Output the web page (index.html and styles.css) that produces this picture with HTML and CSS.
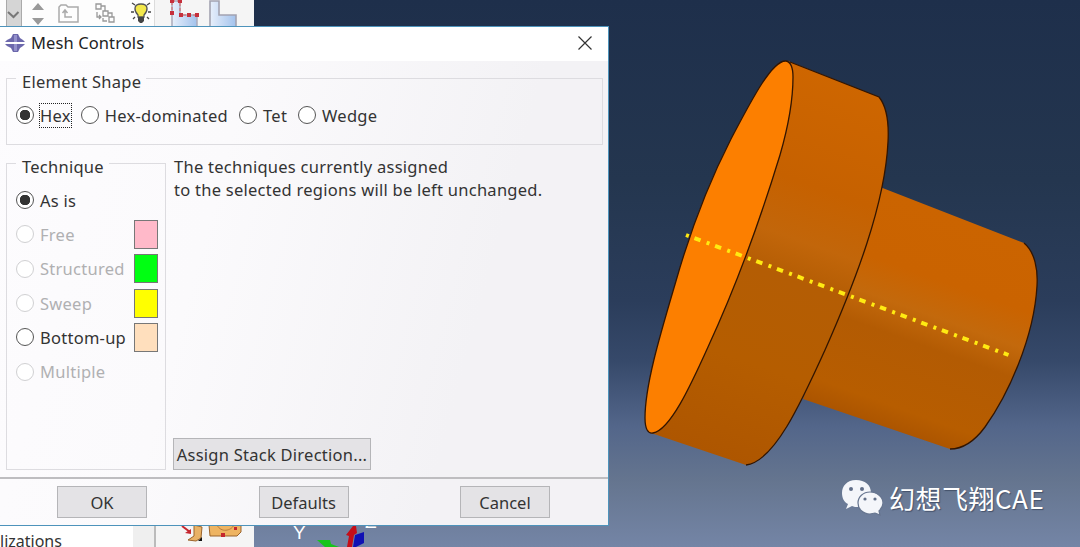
FILE: index.html
```
<!DOCTYPE html>
<html lang="en">
<head>
    <meta charset="UTF-8">
    <meta name="viewport" content="width=device-width, initial-scale=1.0">
    <title>Mesh Controls</title>
    <link rel="stylesheet" href="styles.css">
</head>
<body>
    <div class="app">
        <div class="sidebar">
            <svg class="toolbar" viewBox="0 0 254 26">
                <rect width="154" height="26" fill="#fdfdfd"/>
                <rect x="154" width="100" height="26" fill="#f5f5f5"/>
                <path d="M154.5 0v26" stroke="#dcdcdc"/>
                <rect x="6.500" y="-2" width="15" height="30" fill="#d5d5d5" stroke="#aaa"/>
                <path d="M8 12l5.500 5 5-5" fill="none" stroke="#777" stroke-width="2"/>
                <path d="M32 10l6-7 6 7zM32 18h12l-6 7z" fill="#999"/>
                <path d="M59 22V7l2-2h5l2 2h10v15zM72 17h-7v-6m-2.500 2l2.500-3 2.500 3" fill="none" stroke="#aaa" stroke-width="1.500"/>
                <path d="M96 4h5v5h-5zM103 11h5v5h-5zM109 17h5v5h-5zM101 6h4v5M108 13h4v4M97 12v5h4m-2-2l2 2-2 2M103 18v3h4" fill="none" stroke="#999" stroke-width="1.300"/>
                <path d="M141 4c-8 0-7 7-3 11v2h6v-2c4-4 5-11-3-11z" fill="#f3e84b" stroke="#555" stroke-width="1.300"/>
                <path d="M138 17h6v4l-2 2h-2l-2-2z" fill="#444"/>
                <path d="M132 3l3 2M131 12h3M133 19l2-2M150 3l-3 2M151 12h-3M149 19l-2-2" stroke="#444" stroke-width="1.300"/>
                <path d="M172 27V1h8v14h17v12z" fill="url(#part)" stroke="#aab" stroke-width="1.500"/>
                <path d="M172 1h8v14h17M172 2v11" fill="none" stroke="#d66" stroke-dasharray="3 2"/>
                <path d="M170 0h4v3h-4zM178 0h4v3h-4zM170 11h4v4h-4zM179 13h4v4h-4zM187 13h4v4h-4zM195 13h4v4h-4z" fill="#c6303c"/>
                <path d="M210 27V1h9v14h17v12z" fill="url(#part)" stroke="#a3a3b1" stroke-width="1.600"/>
                <defs>
                    <linearGradient id="part">
                        <stop offset="0" stop-color="#e7effb"/>
                        <stop offset="1" stop-color="#a3c2ec"/>
                    </linearGradient>
                </defs>
            </svg>
            <div class="tree">
                <span class="tree-text">lizations</span>
                <span class="tree-scroll"></span>
                <svg class="tools" viewBox="156 526 98 21">
                    <path d="M194 525l8 2-1 11-5 3-8-1 6-4z" fill="#e9b266" stroke="#9b642c"/>
                    <path d="M182 526l8 6" stroke="#c5262e" stroke-width="2"/>
                    <path d="M185 533l6-4v5z" fill="#c5262e"/>
                    <path d="M198 541l4-4v4z" fill="#111"/>
                    <path d="M209 525h32v7l-4 4h-27z" fill="#eeb462" stroke="#9b642c"/>
                    <path d="M217 525c4 8 14 6 17 0" fill="none" stroke="#b67b3b"/>
                    <path d="M221 533h4v4h-4zM234 527h3v3h-3z" fill="#c5262e"/>
                </svg>
            </div>
        </div>

        <div class="viewport">
            <svg class="model" viewBox="254 0 826 547">
                <defs>
                    <linearGradient id="flange" gradientUnits="userSpaceOnUse" x1="832" y1="75" x2="700" y2="450">
                        <stop offset="0" stop-color="#ce6600"/>
                        <stop offset=".28" stop-color="#c66100"/>
                        <stop offset=".42" stop-color="#c2660a"/>
                        <stop offset=".52" stop-color="#b45d04"/>
                        <stop offset=".75" stop-color="#b55d00"/>
                        <stop offset="1" stop-color="#ae5600"/>
                    </linearGradient>
                    <linearGradient id="shaft" gradientUnits="userSpaceOnUse" x1="955" y1="215" x2="880" y2="425">
                        <stop offset="0" stop-color="#cb6400"/>
                        <stop offset=".3" stop-color="#ca6300"/>
                        <stop offset=".46" stop-color="#c3690c"/>
                        <stop offset=".6" stop-color="#b35b03"/>
                        <stop offset=".9" stop-color="#b75d00"/>
                        <stop offset="1" stop-color="#ac5500"/>
                    </linearGradient>
                </defs>

                <!-- shaft -->
                <path d="M880 187L1024 243C1035 252 1038 270 1037 286C1034 338 1008 395 985 427C974 442 962 449 950 449L803 399z" fill="url(#shaft)"/>
                <path class="edge" d="M1024 243C1035 252 1038 270 1037 286C1034 338 1008 395 985 427C974 442 962 449 950 449"/>

                <!-- flange -->
                <path d="M788 61L879 97C887 107 889 124 888 142C885 204 856 280 825 350C801 403 774 462 746 465L651 433z" fill="url(#flange)"/>
                <path class="edge" d="M790 62L879 97C887 107 889 124 888 142C885 204 856 280 825 350C801 403 774 462 746 465"/>
                <path d="M786 61C772 60 751 101 731 139C708 184 690 232 676 281C661 332 645 384 645 418C645 429 648 434 653 433C670 430 690 387 708 347C738 282 762 214 780 155C789 124 793 96 793 77C793 69 791 62 786 61z" fill="#fc7f00" stroke="#321500" stroke-width="1.300"/>

                <path class="axis" d="M686 235L1008.500 355"/>

                <!-- triad -->
                <text class="triad" x="293" y="539">Y</text>
                <text class="triad" x="365" y="528">Z</text>
                <path d="M317 540h13l1 4 8 3h-14z" fill="#16c51b"/>
                <path d="M346 535l7-9h3l1 7-3 2-2 12h-5l2-11z" fill="#c50d17"/>
                <path d="M355 535l9-3v11l-8 4h-3z" fill="#1010b4"/>
            </svg>
            <div class="watermark">
                <svg class="wechat" viewBox="0 0 42 38">
                    <path d="M15 1C6 1 1 7 1 14c0 5 2 9 6 11l-2 5 6-3c2 1 4 1 6 1 8 0 13-6 13-14S24 1 15 1z"/>
                    <path class="front" d="M29 13c-7 0-12 5-12 11s5 11 12 11l5-1 5 2-1-4c2-2 4-5 4-8 0-6-6-11-13-11z"/>
                    <g class="eyes">
                        <circle cx="10" cy="10" r="2"/>
                        <circle cx="21" cy="10" r="2"/>
                        <circle cx="24" cy="20" r="1.600"/>
                        <circle cx="34" cy="20" r="1.600"/>
                    </g>
                </svg>
                <span>幻想飞翔CAE</span>
            </div>
        </div>
    </div>

    <div class="dialog">
        <div class="titlebar">
            <svg class="logo" viewBox="0 0 20 20">
                <path d="M0 9l2-2 4-2 2-4h5l2 4 3 2 2 2zM0 11h20l-2 2-3 2-2 4H8l-2-4-4-2z" fill="#6c68ac"/>
                <path d="M9 2h3v7H9zM9 11h3v7H9z" fill="#9491cb"/>
            </svg>
            <span class="title">Mesh Controls</span>
            <svg class="close" viewBox="0 0 14 14">
                <path d="M.5.5l13 13M13.500.5l-13 13"/>
            </svg>
        </div>

        <div class="content">
            <fieldset class="shape">
                <legend>Element Shape</legend>
                <label class="option checked"><i></i><span class="focused">Hex</span></label>
                <label class="option"><i></i><span>Hex-dominated</span></label>
                <label class="option"><i></i><span>Tet</span></label>
                <label class="option"><i></i><span>Wedge</span></label>
            </fieldset>

            <div class="columns">
                <fieldset class="technique">
                    <legend>Technique</legend>
                    <label class="option checked"><i></i><span>As is</span></label>
                    <label class="option disabled"><i></i><span>Free</span><b class="swatch pink"></b></label>
                    <label class="option disabled"><i></i><span>Structured</span><b class="swatch green"></b></label>
                    <label class="option disabled"><i></i><span>Sweep</span><b class="swatch yellow"></b></label>
                    <label class="option"><i></i><span>Bottom-up</span><b class="swatch bisque"></b></label>
                    <label class="option disabled"><i></i><span>Multiple</span></label>
                </fieldset>
                <div class="details">
                    <p>The techniques currently assigned<br>to the selected regions will be left unchanged.</p>
                    <button class="boton assign">Assign Stack Direction...</button>
                </div>
            </div>
        </div>

        <div class="footer">
            <button class="boton">OK</button>
            <button class="boton">Defaults</button>
            <button class="boton">Cancel</button>
        </div>
    </div>
</body>
</html>
```
FILE: styles.css
```
* {
    box-sizing: border-box;
}
body {
    margin: 0;
    overflow: hidden;
    font-family: "Noto Sans", "Open Sans", sans-serif;
    font-size: 16.5px;
    color: #333;
}
.app {
    display: flex;
    width: 1080px;
    height: 547px;
}
.sidebar {
    display: flex;
    flex-direction: column;
    justify-content: space-between;
    width: 254px;
    background-color: #fff;
}
.toolbar {
    display: block;
    width: 254px;
    height: 26px;
}
.tree {
    display: flex;
    height: 21px;
}
.tree-text {
    width: 133px;
    padding-top: 5px;
    font-size: 16px;
    line-height: 20px;
}
.tree-scroll {
    width: 23px;
    background-color: #efefef;
    border-right: 2px solid #bbb;
}
.tools {
    width: 98px;
    height: 21px;
    background-color: #f5f5f5;
}
.viewport {
    position: relative;
    flex: 1;
    background: linear-gradient(#1e2f4b 0, #24364f 33%, #2b3d5b 55%, #36496a 66%, #53668a 78%, #65758f 88%, #7485a6 100%);
}
.model {
    display: block;
    width: 826px;
    height: 547px;
}
.edge {
    fill: none;
    stroke: #321500;
    stroke-width: 1.3;
}
.axis {
    fill: none;
    stroke: #ffea12;
    stroke-width: 4;
    stroke-dasharray: 3 6 6.500 6.500;
}
.triad {
    fill: #fff;
    font-family: "Liberation Sans", sans-serif;
    font-size: 19px;
}
.watermark {
    position: absolute;
    left: 587px;
    top: 479px;
    display: flex;
    gap: 6px;
    color: #fff;
    font-family: "Noto Sans CJK SC", sans-serif;
    font-size: 26px;
    letter-spacing: 0.5px;
    line-height: 37px;
    white-space: nowrap;
    text-shadow: 1px 1px 1px #44516a;
}
.wechat {
    width: 42px;
    height: 38px;
    fill: #f4f6fa;
}
.front {
    stroke: #66758f;
    stroke-width: 1.2;
}
.eyes {
    fill: #627089;
}
.dialog {
    position: absolute;
    left: 0;
    top: 26px;
    display: flex;
    flex-direction: column;
    width: 609px;
    height: 500px;
    background: linear-gradient(105deg, #fdfcfe 0, #fbfafc 35%, #f3f2f5 75%);
    border: 1px solid #4d93bb;
    border-left: 0;
}
.titlebar {
    display: flex;
    align-items: center;
    height: 34px;
    padding: 0 16px 2px 5px;
    background-color: #fff;
    color: #222;
}
.logo {
    width: 20px;
    height: 20px;
    margin-right: 6px;
}
.title {
    flex: 1;
    padding-bottom: 1px;
    letter-spacing: 0.1px;
}
.close {
    width: 14px;
    height: 14px;
    fill: none;
    stroke: #333;
    stroke-width: 1.2;
}
.content {
    height: 418px;
    padding: 3px 5px 0 6px;
    border-bottom: 2px solid #bebdc0;
    letter-spacing: 0.26px;
}
fieldset {
    margin: 0;
    border: 1px solid #dddce0;
}
legend {
    padding: 7px 5px 0 6px;
    line-height: 22px;
}
.shape {
    display: flex;
    height: 81px;
    padding: 10px 9px 0;
}
.option {
    display: flex;
    align-items: center;
    height: 24px;
    white-space: nowrap;
}
.shape .option {
    margin-right: 11px;
}
.shape .checked {
    margin-right: 10px;
}
.option i {
    width: 18px;
    height: 18px;
    margin-right: 6px;
    border: 1.5px solid #555;
    border-radius: 50%;
    background-color: #fff;
}
.checked i {
    background: radial-gradient(circle, #333 0 5px, #fff 5.5px);
}
.disabled {
    color: #b0b0b2;
}
.disabled i {
    border-color: #d0d0d2;
}
.focused {
    outline: 1px dotted #222;
}
.columns {
    display: flex;
    gap: 7px;
    margin-top: 4px;
}
.technique {
    width: 160px;
    height: 321px;
    padding: 5px 7px 0 9px;
}
.technique .option {
    height: 34.3px;
}
.swatch {
    width: 24px;
    height: 29px;
    margin-left: auto;
    border: 1.5px solid #777;
}
.pink {
    background-color: #ffb9c9;
}
.green {
    background-color: #00ff12;
}
.yellow {
    background-color: #ffff00;
}
.bisque {
    background-color: #ffdfbd;
}
.details {
    display: flex;
    flex-direction: column;
    justify-content: space-between;
    align-items: flex-start;
    padding-top: 6px;
    line-height: 23px;
}
.details p {
    margin: 0 0 0 1px;
    white-space: nowrap;
}
.boton {
    width: 90px;
    height: 32px;
    padding: 0;
    border: 1.5px solid #b5b5b8;
    background-color: #e4e3e6;
    color: #333;
    font: inherit;
    white-space: nowrap;
}
.assign {
    width: 198px;
    letter-spacing: 0.25px;
}
.footer {
    display: flex;
    justify-content: space-between;
    padding: 7px 58px 0 57px;
}
```
